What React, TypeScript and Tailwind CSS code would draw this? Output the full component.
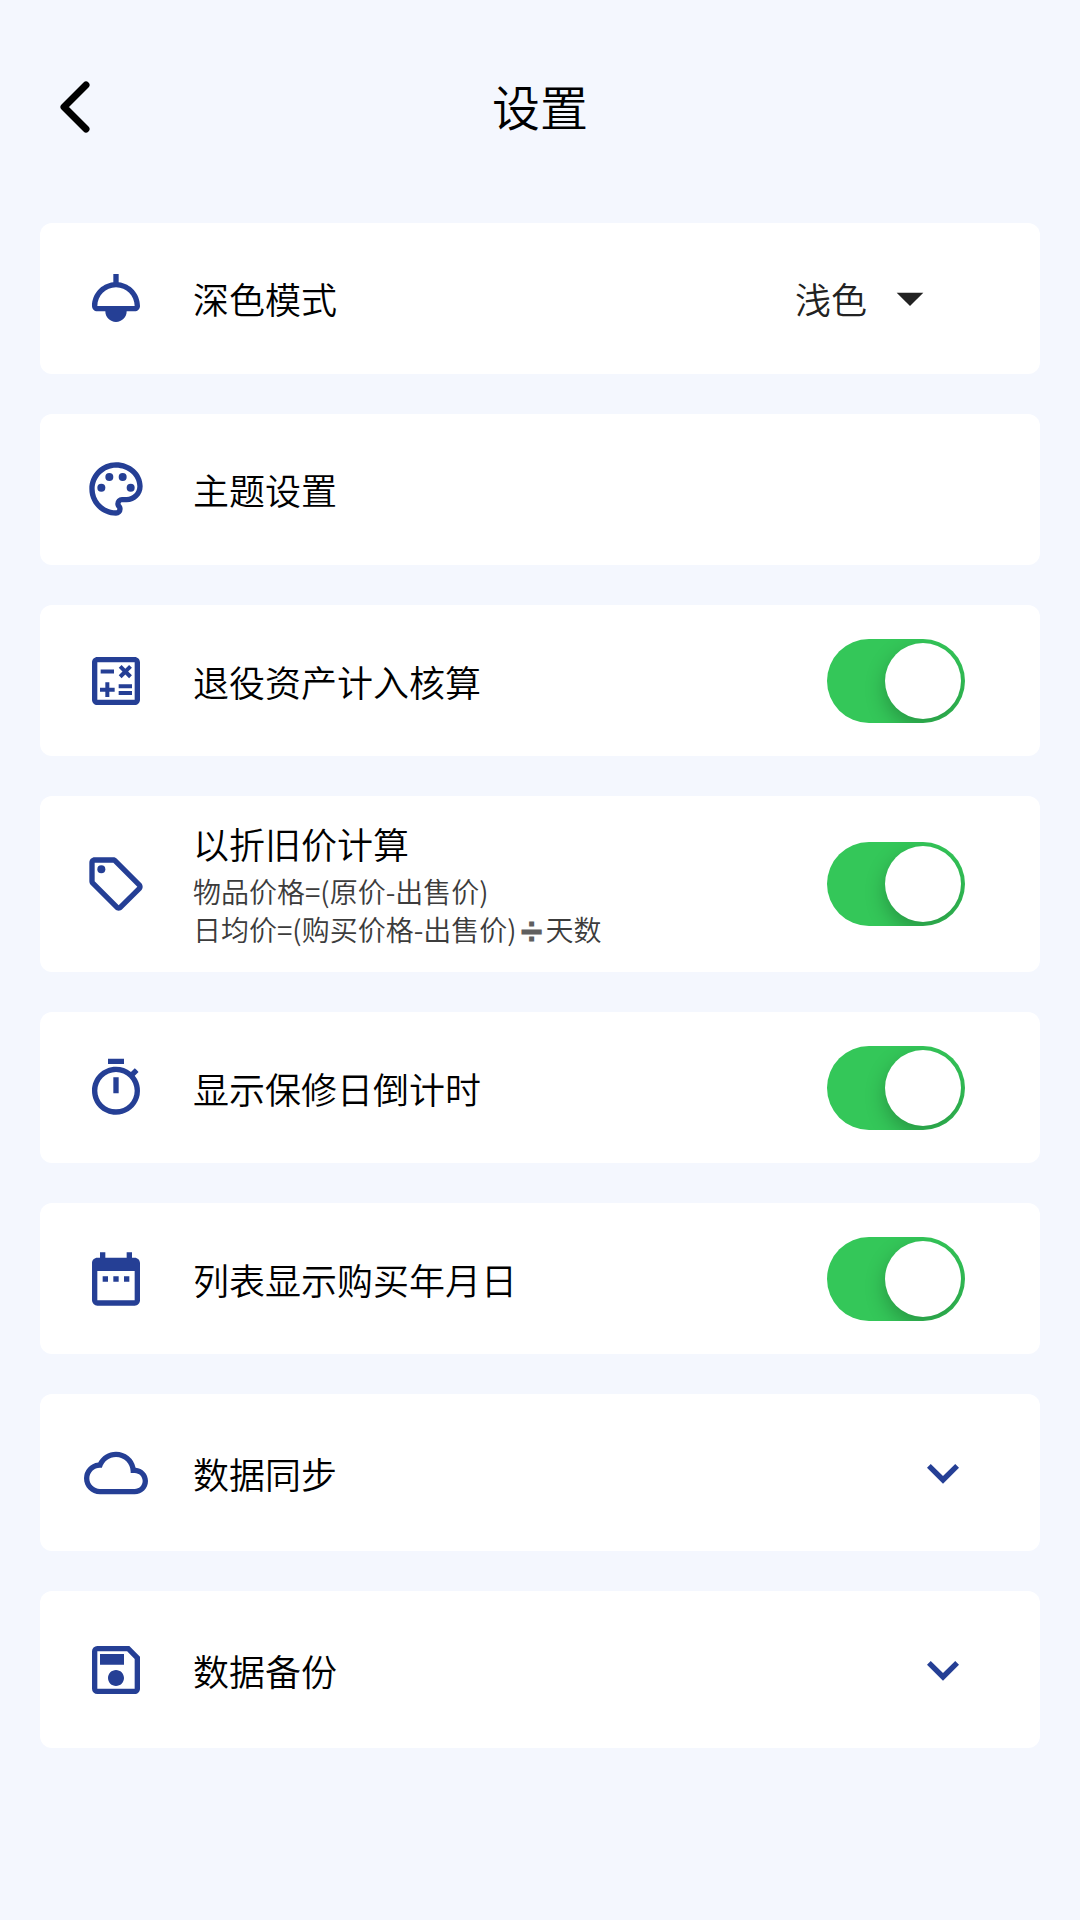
import { useState } from "react"
import type { ReactNode, SVGProps } from "react"
import {
  MdArrowDropDown,
  MdCloudQueue,
  MdDateRange,
  MdExpandMore,
  MdOutlineCalculate,
  MdOutlineLocalOffer,
  MdOutlinePalette,
  MdOutlineSave,
  MdOutlineTimer,
} from "react-icons/md"

type Icon = (props: SVGProps<SVGSVGElement>) => ReactNode

// Ceiling lamp with a solid bulb
function LampIcon(props: SVGProps<SVGSVGElement>) {
  return (
    <svg viewBox="0 0 24 24" fill="currentColor" {...props}>
      <path d="M13 6.06V3h-2v3.06c-4.5.5-8 4.31-8 8.93C3 16.1 3.9 17 5.01 17H8c0 2.21 1.79 4 4 4s4-1.79 4-4h2.99c1.11 0 2.01-.9 2.01-2.01 0-4.62-3.5-8.43-8-8.93zM12 8c3.86 0 7 3.14 7 7H5c0-3.86 3.14-7 7-7z" fillRule="evenodd" />
    </svg>
  )
}

interface RowProps {
  icon: Icon
  children: ReactNode
}

// Shared inside of every card: icon on the left, the rest follows
function RowContent({ icon: Icon, children }: RowProps) {
  return (
    <>
      <Icon className="size-16 shrink-0 text-[#253f95]" aria-hidden="true" />
      {children}
    </>
  )
}

interface SwitchRowProps {
  id: string
  icon: Icon
  label: string
  notes?: ReactNode
}

function SwitchRow({ id, icon, label, notes }: SwitchRowProps) {
  const [checked, setChecked] = useState(true)

  return (
    <div className="flex min-h-[151px] items-center gap-[45px] rounded-xl bg-white py-6 pl-11 pr-[75px]">
      <RowContent icon={icon}>
        <label htmlFor={id} className="flex-1">
          <span className="block">{label}</span>
          {notes && <span className="mt-1.5 block text-[28px] leading-[38px] text-[#3c3c3c]">{notes}</span>}
        </label>
        <input
          id={id}
          type="checkbox"
          role="switch"
          checked={checked}
          onChange={(e) => setChecked(e.target.checked)}
          className="flex h-[84px] w-[138px] shrink-0 cursor-pointer appearance-none items-center overflow-hidden rounded-full bg-[#e9e9eb] p-1 transition-colors before:size-[76px] before:rounded-full before:bg-white before:shadow-[0_8px_20px_rgba(0,0,0,0.25)] before:transition-transform before:content-[''] checked:bg-[#34c759] checked:before:translate-x-[54px]"
        />
      </RowContent>
    </div>
  )
}

interface ExpandRowProps {
  icon: Icon
  label: string
}

function ExpandRow({ icon, label }: ExpandRowProps) {
  const [open, setOpen] = useState(false)

  return (
    <button
      type="button"
      aria-expanded={open}
      onClick={() => setOpen((prev) => !prev)}
      className="flex min-h-[157px] items-center gap-[45px] rounded-xl bg-white pl-11 pr-[65px] text-left"
    >
      <RowContent icon={icon}>
        <span className="flex-1">{label}</span>
        <MdExpandMore className={`size-16 shrink-0 text-[#253f95] ${open ? "rotate-180" : ""}`} aria-hidden="true" />
      </RowContent>
    </button>
  )
}

export default function App() {
  const [mode, setMode] = useState("浅色")

  return (
    <div className="min-h-screen bg-[#f4f7fe] font-['Noto_Sans_CJK_SC',sans-serif] text-[36px] leading-[46px] font-[350] text-black">
      <header className="grid h-[223px] grid-cols-[1fr_auto_1fr] items-start px-10 pt-[73px]">
        <button type="button" aria-label="返回" className="flex size-16 items-center justify-center">
          <svg viewBox="0 0 64 64" className="size-16" fill="none" stroke="currentColor" strokeWidth="7" strokeLinecap="round" strokeLinejoin="round">
            <path d="M46 12 L24 34 L46 56" />
          </svg>
        </button>
        <h1 className="text-[48px] leading-[64px]">设置</h1>
      </header>

      <main className="flex flex-col gap-10 px-10 pb-10">
        <div className="flex min-h-[151px] items-center gap-[45px] rounded-xl bg-white pb-0.5 pl-11 pr-[98px]">
          <RowContent icon={LampIcon}>
            <label htmlFor="mode" className="flex-1">
              深色模式
            </label>
            <div className="relative">
              <select
                id="mode"
                value={mode}
                onChange={(e) => setMode(e.target.value)}
                className="block cursor-pointer appearance-none bg-transparent pr-[74px] text-[#222222]"
              >
                <option>浅色</option>
                <option>深色</option>
              </select>
              <MdArrowDropDown
                className="pointer-events-none absolute inset-y-0 right-0 my-auto size-16 text-[#222222]"
                aria-hidden="true"
              />
            </div>
          </RowContent>
        </div>

        <button
          type="button"
          className="flex min-h-[151px] items-center gap-[45px] rounded-xl bg-white pb-0.5 pl-11 pr-[75px] text-left"
        >
          <RowContent icon={MdOutlinePalette}>
            <span className="flex-1">主题设置</span>
          </RowContent>
        </button>

        <SwitchRow id="retired" icon={MdOutlineCalculate} label="退役资产计入核算" />
        <SwitchRow
          id="depreciation"
          icon={MdOutlineLocalOffer}
          label="以折旧价计算"
          notes={
            <>
              <span className="block">物品价格=(原价-出售价)</span>
              <span className="block">
                日均价=(购买价格-出售价)
                <span className="mx-1 font-['DejaVu_Sans',sans-serif] leading-none font-bold text-[#5f5f5f]">
                  {"\u2797\uFE0E"}
                </span>
                天数
              </span>
            </>
          }
        />
        <SwitchRow id="warranty" icon={MdOutlineTimer} label="显示保修日倒计时" />
        <SwitchRow id="purchase-date" icon={MdDateRange} label="列表显示购买年月日" />

        <ExpandRow icon={MdCloudQueue} label="数据同步" />
        <ExpandRow icon={MdOutlineSave} label="数据备份" />
      </main>
    </div>
  )
}
